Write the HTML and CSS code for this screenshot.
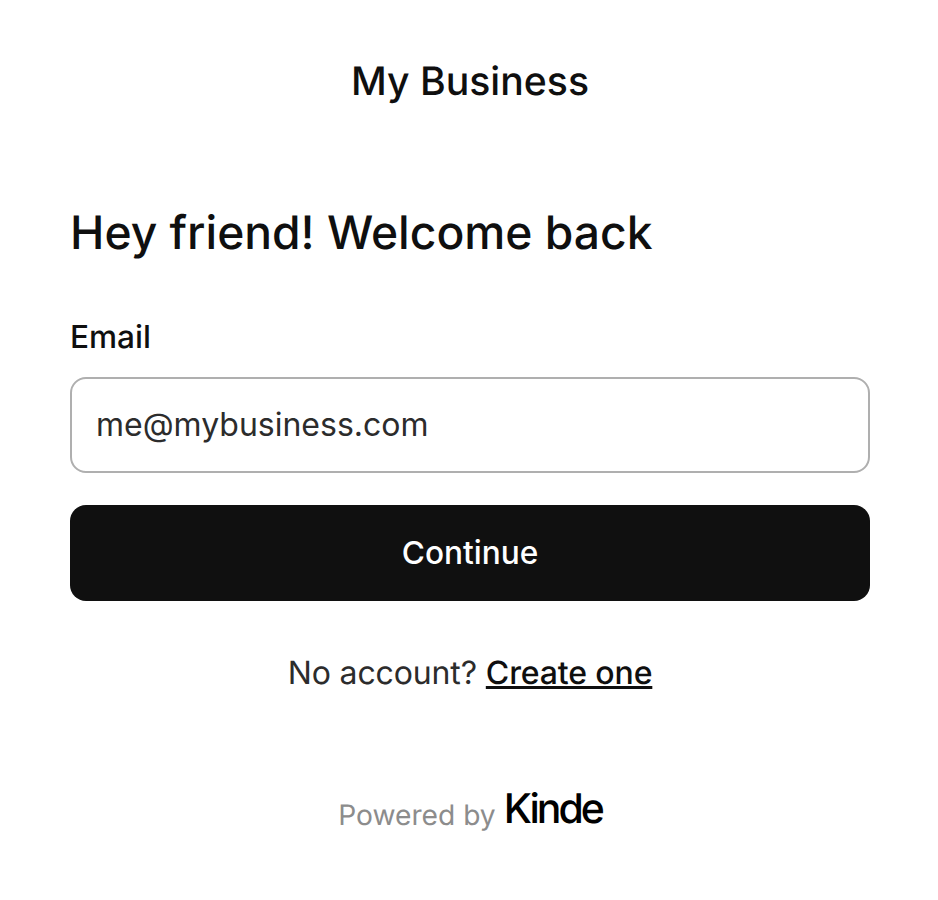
FILE: index.html
```html
<!DOCTYPE html>
<html lang="en">
<head>
  <meta charset="UTF-8">
  <meta name="viewport" content="width=device-width, initial-scale=1.0">
  <title>My Business</title>
  <link rel="stylesheet" href="styles.css">
</head>
<body>
  <main class="page">
    <div class="brand">My Business</div>
    <h1 class="title">Hey friend! Welcome back</h1>
    <form class="form">
      <label class="label" for="email">Email</label>
      <input class="input" id="email" type="text" placeholder="me@mybusiness.com">
      <button class="button" type="button">Continue</button>
    </form>
    <p class="switch">No account? <a class="switch-link" href="#">Create one</a></p>
    <footer class="powered">
      <span class="powered-text">Powered by</span>
      <span class="kinde">Kinde</span>
    </footer>
  </main>
</body>
</html>
```

FILE: styles.css
```css
body {
  margin: 0;
  background-color: #fff;
  color: #0f0f0f;
  font-family: Inter, "Liberation Sans", sans-serif;
  text-rendering: geometricPrecision;
}

.page {
  width: 800px;
  margin-left: 70px;
  padding-top: 58px;
  display: flex;
  flex-direction: column;
}

.brand {
  font-size: 39.2px;
  line-height: 48px;
  font-weight: 500;
  text-align: center;
}

.title {
  margin: 98px 0 0;
  font-size: 46.2px;
  line-height: 58px;
  font-weight: 500;
}

.form {
  margin-top: 55px;
  display: flex;
  flex-direction: column;
}

.label {
  font-size: 31.6px;
  line-height: 40px;
  font-weight: 500;
}

.input {
  margin-top: 20px;
  height: 96px;
  box-sizing: border-box;
  padding: 0 24px 2px;
  border: 2px solid #afafaf;
  border-radius: 16px;
  font: 400 32px Inter, "Liberation Sans", sans-serif;
}

.input::placeholder {
  color: #2c2c2c;
  opacity: 1;
}

.button {
  margin-top: 32px;
  height: 96px;
  padding: 0 0 2px;
  border: 0;
  border-radius: 16px;
  background-color: #101010;
  color: #fff;
  font: 500 31.6px Inter, "Liberation Sans", sans-serif;
}

.switch {
  margin: 52px 0 0;
  font-size: 32px;
  line-height: 40px;
  letter-spacing: -0.13px;
  text-align: center;
  color: #2c2c2c;
}

.switch-link {
  color: #0f0f0f;
  font-weight: 500;
}

.powered {
  margin-top: 90px;
  display: flex;
  justify-content: center;
  align-items: center;
  gap: 8px;
}

.powered-text {
  margin-top: 13px;
  font-size: 28.2px;
  color: #8c8c8c;
}

.kinde {
  font-size: 41px;
  font-weight: 500;
  letter-spacing: -3px;
  color: #000;
}
```
